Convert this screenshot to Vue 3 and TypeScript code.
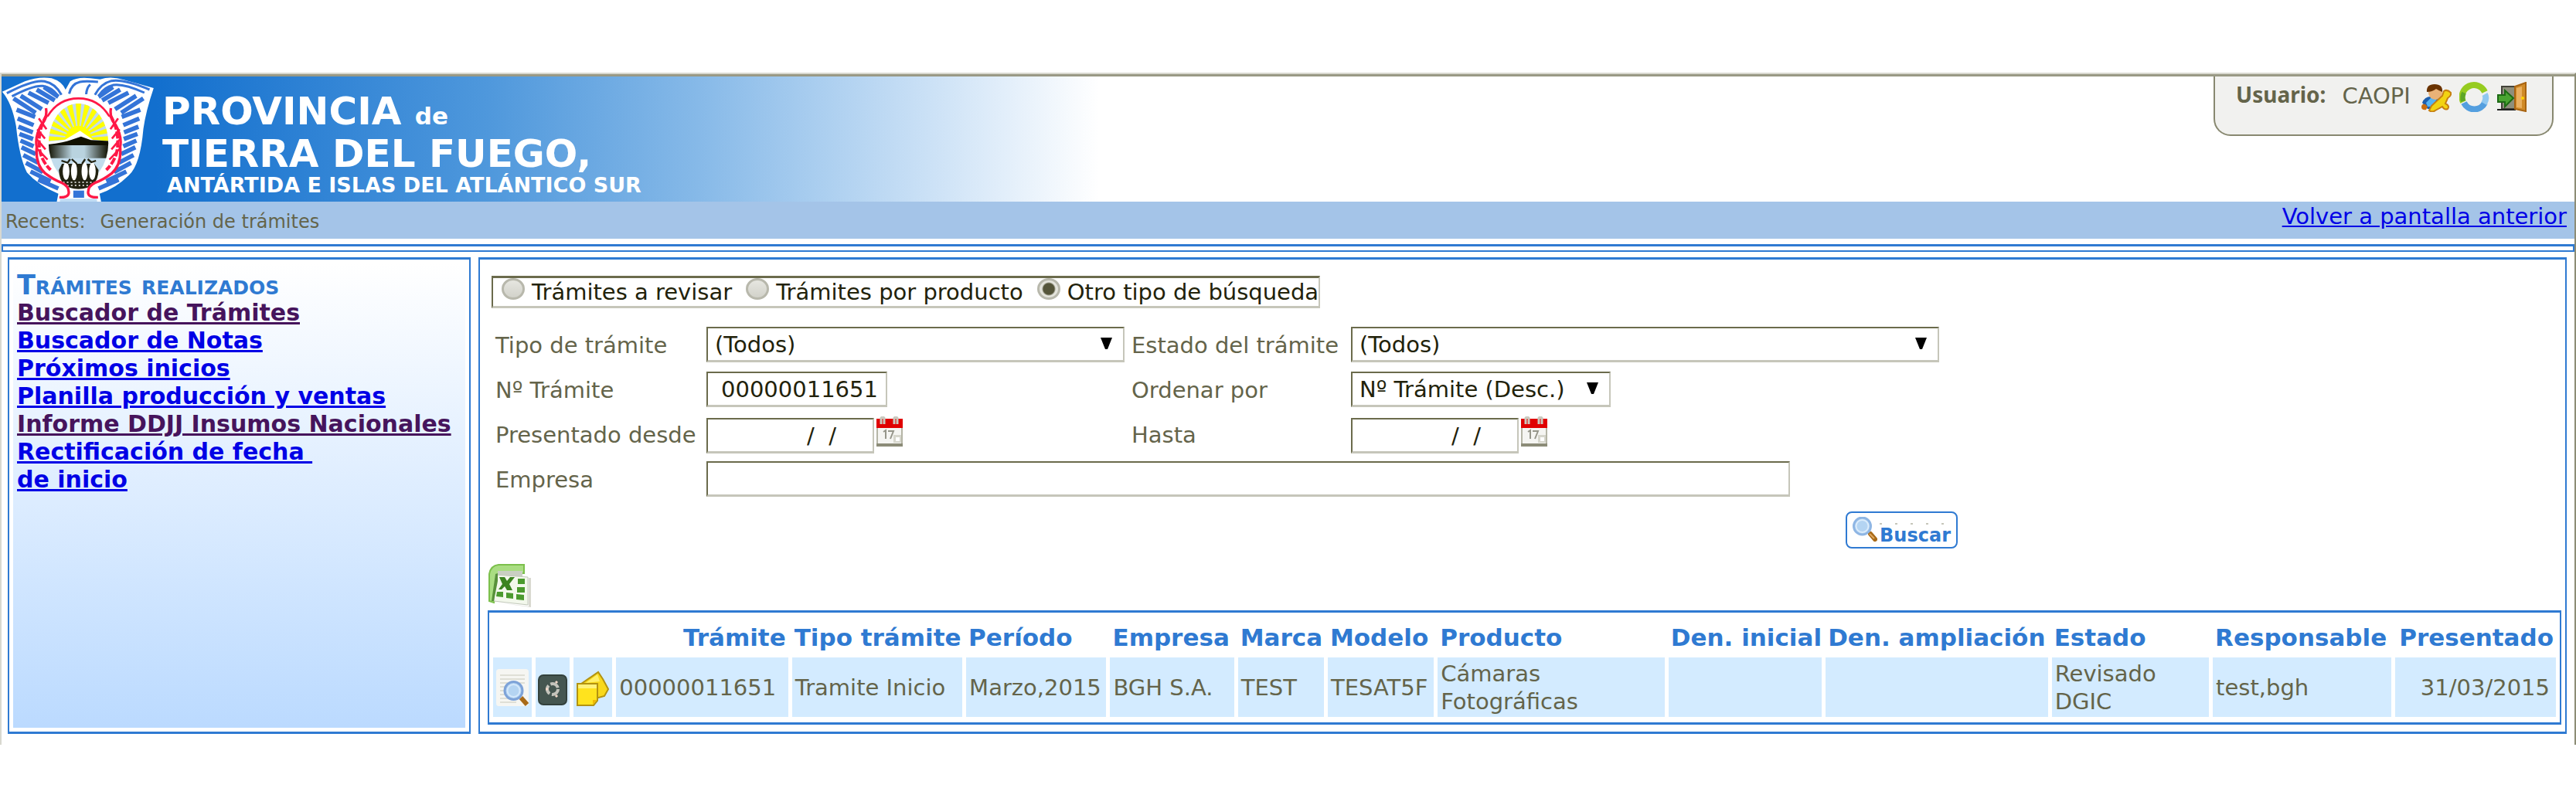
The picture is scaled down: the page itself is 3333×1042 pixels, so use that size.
<script setup lang="ts">
import { ref } from 'vue'

interface MenuItem {
  text: string
  visited: boolean
}

interface Column {
  title: string
  width: number
  right?: boolean
}

const menu: MenuItem[] = [
  { text: 'Buscador de Trámites', visited: true },
  { text: 'Buscador de Notas', visited: false },
  { text: 'Próximos inicios', visited: false },
  { text: 'Planilla producción y ventas', visited: false },
  { text: 'Informe DDJJ Insumos Nacionales', visited: true },
  { text: 'Rectificación de fecha\u00a0\nde inicio', visited: false },
]

const searchModes = ['Trámites a revisar', 'Trámites por producto', 'Otro tipo de búsqueda']
const mode = ref(searchModes[2])

const columns: Column[] = [
  { title: '', width: 50 },
  { title: '', width: 44 },
  { title: '', width: 50 },
  { title: 'Trámite', width: 222, right: true },
  { title: 'Tipo trámite', width: 220 },
  { title: 'Período', width: 181 },
  { title: 'Empresa', width: 160 },
  { title: 'Marca', width: 111 },
  { title: 'Modelo', width: 137 },
  { title: 'Producto', width: 293 },
  { title: 'Den. inicial', width: 198 },
  { title: 'Den. ampliación', width: 287 },
  { title: 'Estado', width: 203 },
  { title: 'Responsable', width: 230 },
  { title: 'Presentado', width: 208, right: true },
]

const row = [
  '00000011651', 'Tramite Inicio', 'Marzo,2015', 'BGH S.A.', 'TEST', 'TESAT5F',
  'Cámaras\nFotográficas', '', '', 'Revisado\nDGIC', 'test,bgh', '31/03/2015',
]

const tramite = ref('00000011651')
const desde = ref('/  /')
const hasta = ref('/  /')
const empresa = ref('')

const wingFeathers =
  'M52 142L138 198M80 132L162 184M110 120L188 160M142 108L212 150M170 98L226 136' +
  'M64 186L136 214M68 220L130 246M71 252L127 274M75 280L128 300M79 306L130 328' +
  'M83 332L138 358M90 362L148 392M100 392L166 428M118 426L196 464M148 458L226 492'

const sunRays = Array.from({ length: 13 }, (_, i) => {
  const a = Math.PI + (i * Math.PI) / 12
  const x1 = Math.round(304 + 150 * Math.cos(a - 0.08))
  const y1 = Math.round(298 + 150 * Math.sin(a - 0.08))
  const x2 = Math.round(304 + 150 * Math.cos(a + 0.08))
  const y2 = Math.round(298 + 150 * Math.sin(a + 0.08))
  return `M304 298L${x1} ${y1}L${x2} ${y2}Z`
}).join('')
</script>

<template>
  <div class="frame">
    <header class="banner">
      <svg class="crest" viewBox="6 57 590 486" aria-hidden="true">
        <defs>
          <linearGradient id="band" x1="0" x2="1" y1="0" y2="0">
            <stop offset="0" stop-color="#111100" />
            <stop offset="0.4" stop-color="#b9d3df" />
            <stop offset="0.6" stop-color="#b9d3df" />
            <stop offset="1" stop-color="#111100" />
          </linearGradient>
          <clipPath id="oval"><ellipse cx="304" cy="316" rx="116" ry="154" /></clipPath>
        </defs>
        <path fill="#fff" d="M8 116L96 76Q150 56 200 64Q240 76 254 108L272 76Q300 58 350 64L388 68Q430 54 480 70L596 102Q566 190 556 260Q544 400 500 440Q450 490 386 512L392 543H220L226 512Q150 482 104 430Q74 370 62 250Q46 160 8 116Z" />
        <g fill="none" stroke="#3474d8">
          <path stroke-width="9" d="M26 122Q130 68 172 76Q214 84 238 128M46 134Q130 90 166 94Q200 100 222 128" />
          <path stroke-width="9" d="M580 108Q480 66 432 74Q392 84 368 128M560 120Q480 84 440 90Q404 98 384 130M268 124Q276 86 310 78Q330 74 380 78M334 126Q336 100 350 88" />
          <path stroke-width="17" :d="wingFeathers" />
          <path stroke-width="17" transform="translate(608 0) scale(-1 1)" :d="wingFeathers" />
        </g>
        <path fill="#3474d8" d="M284 500H326V528H284Z" />
        <path fill="#c0dcf4" d="M232 532H376V543H232Z" />
        <ellipse cx="304" cy="312" rx="166" ry="182" fill="#fff" />
        <g clip-path="url(#oval)">
          <path fill="#c2dcec" d="M180 150H430V480H180Z" />
          <path fill="#ffff00" :d="sunRays" />
          <path fill="#ffff00" d="M250 302Q262 250 304 248Q348 250 358 302Z" />
          <path fill="#fff" d="M180 310L250 304L310 268L362 304L430 310V330H180Z" />
          <path fill="#111100" d="M180 322Q250 314 274 304L314 290L352 304L430 308V326H180Z" />
          <path fill="url(#band)" d="M186 324H420V374H186Z" />
        </g>
        <path fill="#222211" d="M228 420Q230 494 304 494Q380 494 382 420L366 396H240Z" />
        <g fill="#fff">
          <ellipse cx="256" cy="425" rx="13" ry="34" />
          <ellipse cx="287" cy="425" rx="12" ry="35" />
          <ellipse cx="328" cy="425" rx="12" ry="35" />
          <ellipse cx="358" cy="425" rx="13" ry="34" />
        </g>
        <path fill="none" stroke="#fff" stroke-width="4" stroke-dasharray="6 9" d="M244 468H366M260 480H350" />
        <path fill="none" stroke="#222211" stroke-width="7" d="M238 384L262 392L272 378M278 378L298 396M318 396L330 378M340 378L354 390L372 384" />
        <g fill="none" stroke="#ff1846">
          <path stroke-width="8" d="M184 212Q226 142 304 142Q382 142 424 212" />
          <path stroke-width="10" d="M178 180Q184 220 160 244Q134 290 142 330Q136 400 176 434Q210 460 240 470Q270 484 266 512Q262 528 230 526" />
          <path stroke-width="10" d="M430 180Q424 220 448 244Q474 290 466 330Q472 400 432 434Q398 460 368 470Q338 484 342 512Q346 528 380 526" />
          <path stroke-width="12" stroke-dasharray="28 7" d="M182 206Q146 262 152 330Q156 380 196 420" />
          <path stroke-width="12" stroke-dasharray="28 7" d="M426 206Q462 262 456 330Q452 380 412 420" />
          <path stroke-width="8" d="M150 220L180 262M144 262L174 298M142 300L176 340M144 338L184 380M458 220L428 262M464 262L434 298M466 300L432 340M464 338L424 380" />
        </g>
      </svg>
      <div class="title">
        <p class="title-main">PROVINCIA <span class="title-de">de</span></p>
        <p class="title-main">TIERRA DEL FUEGO,</p>
        <p class="title-sub">ANTÁRTIDA E ISLAS DEL ATLÁNTICO SUR</p>
      </div>
      <div class="user">
        <b class="user-label">Usuario:</b>
        <span class="user-name">CAOPI</span>
        <a href="#" aria-label="Editar usuario">
          <svg viewBox="0 0 39 39">
            <path fill="#1e5fae" d="M1 27Q4 19 12 19H27L24 35H8Z" />
            <path fill="#55b4f4" d="M6 27L14 19L20 22L14 32H8Z" />
            <circle cx="18" cy="14" r="9" fill="#eab277" />
            <path fill="#6a3300" d="M7 13Q6 3 17 3Q28 3 27 13Q22 11 19 9Q14 13 7 13Z" />
            <path fill="#c86c10" d="M0 33Q0 28 5 29L8 32L6 36Q1 37 0 33Z" />
            <path fill="#f2d312" stroke="#c67f12" stroke-width="2" d="M10 37L13 31L27 18L29 12Q33 9 38 14Q39 18 34 21L31 28Q37 31 34 35Q30 37 27 32L18 37Q14 40 10 37Z" />
          </svg>
        </a>
        <a href="#" aria-label="Actualizar">
          <svg viewBox="0 0 39 39" fill="none" stroke-width="8">
            <path stroke="#96cc20" d="M5 26A15 15 0 0 1 33 13" />
            <path stroke="#5ea628" stroke-width="6" d="M5 25A15 15 0 0 1 6 14" />
            <path stroke="#549fdf" d="M6 27A15 15 0 0 0 33 27" />
            <path stroke="#90c8f0" d="M32 28Q36 21 33 16" />
          </svg>
        </a>
        <a href="#" aria-label="Salir">
          <svg viewBox="0 0 39 39">
            <path fill="#8f8f7c" stroke="#43433a" stroke-width="2" d="M6 6H24V35H6Z" />
            <path stroke="#222" stroke-width="2" d="M0 36H24" />
            <path fill="#d08a28" stroke="#a86412" stroke-width="2" d="M23 6L37 1V38L23 35Z" />
            <path fill="#eab060" d="M25 8L32 6V34L25 33Z" />
            <circle cx="33" cy="21" r="2" fill="#ffd400" />
            <path fill="#4aa432" stroke="#1d6a14" stroke-width="2" d="M1 17H10V11L21 21L10 32V26H1Z" />
          </svg>
        </a>
      </div>
    </header>

    <nav class="crumbs">
      <p class="recents"><span>Recents:</span><span>Generación de trámites</span></p>
      <a class="back" href="#">Volver a pantalla anterior</a>
    </nav>

    <div class="rule"></div>

    <main class="body">
      <aside class="side">
        <div class="side-inner">
          <h2 class="side-title">Trámites realizados</h2>
          <a v-for="m in menu" :key="m.text" href="#" class="side-link" :class="{ visited: m.visited }">{{ m.text }}</a>
        </div>
      </aside>

      <section class="panel">
        <div class="modes" role="radiogroup" aria-label="Modo de búsqueda">
          <label v-for="s in searchModes" :key="s" class="mode">
            <input v-model="mode" type="radio" name="modo" :value="s" />
            <span>{{ s }}</span>
          </label>
        </div>

        <form class="search" @submit.prevent>
          <div class="fields">
            <label for="tipo">Tipo de trámite</label>
            <div class="select w-tipo">
              <select id="tipo"><option>(Todos)</option></select>
              <svg class="arrow" viewBox="0 0 15 15" aria-hidden="true"><path d="M0 0H15L9 15H6Z" /></svg>
            </div>
            <label for="estado">Estado del trámite</label>
            <div class="select w-estado">
              <select id="estado"><option>(Todos)</option></select>
              <svg class="arrow" viewBox="0 0 15 15" aria-hidden="true"><path d="M0 0H15L9 15H6Z" /></svg>
            </div>

            <label for="numero">Nº Trámite</label>
            <input id="numero" v-model="tramite" class="box w-numero" type="text" />
            <label for="orden">Ordenar por</label>
            <div class="select w-orden">
              <select id="orden"><option>Nº Trámite (Desc.)</option></select>
              <svg class="arrow" viewBox="0 0 15 15" aria-hidden="true"><path d="M0 0H15L9 15H6Z" /></svg>
            </div>

            <label for="desde">Presentado desde</label>
            <div class="date">
              <input id="desde" v-model="desde" class="box w-date" type="text" />
              <svg class="calendar" viewBox="0 0 34 39" aria-hidden="true">
                <path fill="#f5f5f2" stroke="#b5b5a6" stroke-width="2" d="M1 12H33V37H1Z" />
                <path fill="#e00000" d="M0 3H34V15H0Z" />
                <path fill="#8c8c78" d="M0 35H34V39H0Z" />
                <path fill="none" stroke="#c9c9be" stroke-width="3" d="M6 10V2Q8 0 10 2V10M23 10V2Q25 0 27 2V10" />
                <path fill="none" stroke="#96968a" stroke-width="2" d="M9 20L12 18V29M15 19H22L18 29" />
                <path fill="#d6d6cc" d="M22 24H32V34H22Z" />
                <path fill="#fff" d="M25 27H30V32H25Z" />
              </svg>
            </div>
            <label for="hasta">Hasta</label>
            <div class="date">
              <input id="hasta" v-model="hasta" class="box w-date" type="text" />
              <svg class="calendar" viewBox="0 0 34 39" aria-hidden="true">
                <path fill="#f5f5f2" stroke="#b5b5a6" stroke-width="2" d="M1 12H33V37H1Z" />
                <path fill="#e00000" d="M0 3H34V15H0Z" />
                <path fill="#8c8c78" d="M0 35H34V39H0Z" />
                <path fill="none" stroke="#c9c9be" stroke-width="3" d="M6 10V2Q8 0 10 2V10M23 10V2Q25 0 27 2V10" />
                <path fill="none" stroke="#96968a" stroke-width="2" d="M9 20L12 18V29M15 19H22L18 29" />
                <path fill="#d6d6cc" d="M22 24H32V34H22Z" />
                <path fill="#fff" d="M25 27H30V32H25Z" />
              </svg>
            </div>

            <label for="empresa">Empresa</label>
            <input id="empresa" v-model="empresa" class="box w-empresa" type="text" />
          </div>

          <div class="actions">
            <button class="buscar" type="submit">
              <svg viewBox="0 0 32 32" aria-hidden="true">
                <path stroke="#a86a18" stroke-width="6" stroke-linecap="round" d="M23 22L29 29" />
                <path stroke="#e0a860" stroke-width="2" d="M22 22L28 28" />
                <circle cx="12.5" cy="12" r="11" fill="#b4d4f2" stroke="#8fb6e4" stroke-width="3" />
                <circle cx="12.5" cy="12" r="8" fill="none" stroke="#dcecfb" stroke-width="2" />
              </svg>
              <span class="buscar-text">Buscar</span>
            </button>
          </div>
        </form>

        <a class="excel" href="#" aria-label="Exportar a Excel">
          <svg viewBox="0 0 56 56">
            <path fill="#d9d9d0" d="M12 50L53 55V18L56 18V56Z" />
            <path fill="#a9dd82" stroke="#7cc04c" stroke-width="2" d="M2 48V13Q4 2 14 1H47V12H18L8 50Z" />
            <path fill="#c9cfc2" d="M13 9H45V16H13Z" />
            <path fill="#f3f8ec" stroke="#c2c8ba" d="M10 14L52 17V53L8 48Z" />
            <path fill="#57913a" d="M5 48L10 13L13 12V22L8 48Z" />
            <path fill="#3c8420" d="M15 17H22L25 22L29 17H35L28 26L32 34H25L22 29L18 33H14L19 26Z" />
            <path fill="#4b9a2e" d="M39 19H48V26H39ZM38 30H48V37H38ZM37 39L47 40V47L37 46ZM24 37L33 38V45L24 44ZM12 36H20V43L11 42Z" />
          </svg>
        </a>

        <div class="results">
          <table>
            <colgroup>
              <col v-for="(c, i) in columns" :key="i" :style="{ width: c.width + 'px' }" />
            </colgroup>
            <thead>
              <tr>
                <th v-for="(c, i) in columns" :key="i" scope="col" :class="{ right: c.right }">{{ c.title }}</th>
              </tr>
            </thead>
            <tbody>
              <tr>
                <td class="icon">
                  <a href="#" aria-label="Ver">
                    <svg viewBox="0 0 42 48">
                      <path fill="#f6f6f2" d="M4 0H38Q42 0 42 4V44Q42 48 38 48H3Q0 48 0 44V4Q0 0 4 0Z" />
                      <path stroke="#dfdfd6" stroke-width="2" d="M5 8H37M5 13H37M5 18H37M5 23H15M5 28H13M5 33H13M5 38H15M5 43H26" />
                      <path stroke="#a86a18" stroke-width="6" d="M32 37L40 46" />
                      <circle cx="22.5" cy="28" r="11.5" fill="#b4d4f2" stroke="#7ea3d8" stroke-width="3" />
                      <circle cx="22.5" cy="28" r="8" fill="none" stroke="#d4e8fb" stroke-width="2" />
                    </svg>
                  </a>
                </td>
                <td class="icon">
                  <a href="#" aria-label="Proceso">
                    <svg viewBox="0 0 42 48">
                      <rect x="3" y="8" width="36" height="38" rx="6" fill="#455650" stroke="#33413c" stroke-width="2" />
                      <circle cx="21" cy="26" r="7" fill="none" stroke="#c4c4bc" stroke-width="4" stroke-dasharray="12 3" />
                      <path stroke="#f2d8c8" stroke-width="3" d="M12 26H15M25 18L27 16M25 34L27 36" />
                    </svg>
                  </a>
                </td>
                <td class="icon">
                  <a href="#" aria-label="Notas">
                    <svg viewBox="0 0 42 48" stroke="#b39310" stroke-width="2">
                      <path fill="#f8d81c" d="M6 19L28 4L34 13L41 26L36 35L25 38L14 30Z" />
                      <path fill="#fff06a" stroke="none" d="M12 18L27 7L30 16Z" />
                      <path fill="#ffe31e" d="M1 19H27V41L22 47H1Z" />
                      <path fill="#f2b800" stroke="none" d="M21 40H26L21 46Z" />
                      <path fill="#fff27a" stroke="none" d="M2 20H26V25H2Z" />
                    </svg>
                  </a>
                </td>
                <td v-for="(cell, i) in row" :key="i" :class="{ right: i === row.length - 1 }">{{ cell }}</td>
              </tr>
            </tbody>
          </table>
        </div>
      </section>
    </main>
  </div>
</template>

<style>
body {
  margin: 0;
  background: #fff;
}
</style>

<style scoped>
.frame,
.frame * {
  box-sizing: border-box;
}
.frame {
  margin-top: 94px;
  padding-bottom: 14px;
  border-left: 2px solid #d8d8d0;
  border-top: 2px solid #d8d8d0;
  border-right: 2px solid #8c8c76;
  font-family: 'DejaVu Sans', Verdana, sans-serif;
  font-size: 29px;
  line-height: 36px;
  color: #64644a;
}
.frame svg {
  display: block;
}
p,
h2 {
  margin: 0;
}
.banner {
  display: flex;
  align-items: flex-start;
  height: 165px;
  border-top: 3px solid #999985;
  background: linear-gradient(90deg, #126fce 200px, #4f98dc 630px, #86b9e8 900px, #cbe1f6 1200px, #fff 1420px);
}
.crest {
  flex: none;
  width: 197px;
  height: 162px;
}
.title {
  padding: 21px 0 0 11px;
  color: #fff;
  font-weight: bold;
  white-space: nowrap;
}
.title-main {
  font-size: 50px;
  line-height: 49px;
}
.title-de {
  font-size: 31px;
}
.title-sub {
  padding-left: 6px;
  font-size: 27px;
  line-height: 31px;
}
.user {
  display: flex;
  align-items: flex-start;
  width: 440px;
  height: 77px;
  margin-left: auto;
  margin-right: 27px;
  padding: 7px 0 0 27px;
  border: 2px solid #888870;
  border-top: 0;
  border-radius: 0 0 22px 22px;
  background: #f1f1ef;
}
.user-label {
  font-family: 'Noto Sans', sans-serif;
  font-size: 28px;
  line-height: 32px;
}
.user-name {
  margin: 0 14px 0 21px;
}
.user a {
  margin-right: 10px;
}
.user svg {
  width: 39px;
  height: 39px;
}
.crumbs {
  display: flex;
  justify-content: space-between;
  align-items: flex-start;
  height: 48px;
  padding: 1px 10px 0 5px;
  background: #a4c4e8;
}
.recents {
  display: flex;
  gap: 19px;
  padding-top: 7px;
  font-size: 24px;
}
.back {
  color: #0000e6;
}
.rule {
  height: 10px;
  margin-top: 7px;
  border: 2px solid #2f7ad2;
  border-top-width: 3px;
}
.body {
  display: flex;
  gap: 10px;
  padding: 7px 10px 0 8px;
}
.side {
  flex: none;
  width: 599px;
  padding: 5px;
  border: solid #2f7ad2;
  border-width: 3px 2px;
}
.side-inner {
  height: 100%;
  padding: 10px 0 0 5px;
  background: linear-gradient(#fff, #bbdaff);
  font-size: 30px;
  font-weight: bold;
}
.side-title {
  font-size: 35px;
  line-height: 36px;
  font-weight: bold;
  font-variant: small-caps;
  color: #2f7ad2;
}
.side-link {
  display: table;
  color: #0000e6;
  white-space: pre;
}
.visited {
  color: #46145c;
}
.panel {
  flex: 1;
  min-width: 0;
  padding: 21px 5px 9px 10px;
  border: solid #2f7ad2;
  border-width: 3px 2px;
}
.modes {
  display: flex;
  gap: 18px;
  width: fit-content;
  height: 42px;
  margin-left: 5px;
  padding: 0 0 0 11px;
  border: 2px solid #6b6b4c;
  border-top-width: 3px;
  border-right-color: #c6c6ba;
  border-bottom: 3px solid #c6c6ba;
  color: #22220a;
}
.mode {
  display: flex;
  gap: 9px;
  white-space: nowrap;
}
.mode input {
  appearance: none;
  width: 30px;
  height: 28px;
  margin: 0;
  border: 3px solid #b8b8ac;
  border-radius: 50%;
  background: linear-gradient(#e6e6e0, #d2d2ca);
}
.mode input:checked {
  background: radial-gradient(circle, #55553a 7px, #e4e4dc 9px);
}
.search {
  width: fit-content;
  margin: 24px 0 0 10px;
}
.fields {
  display: grid;
  grid-template-columns: 273px 550px 284px auto;
  grid-auto-rows: 48px;
  row-gap: 10px;
  align-items: start;
}
.fields label {
  line-height: 48px;
  white-space: nowrap;
}
.box,
.select select {
  width: 100%;
  height: 46px;
  margin: 0;
  border: 2px solid #6b6b4c;
  border-right-color: #c6c6ba;
  border-bottom: 3px solid #c6c6ba;
  border-radius: 0;
  background: #fff;
  color: #22220a;
  font: inherit;
  outline: 0;
}
.select {
  position: relative;
}
.select select {
  appearance: none;
  padding: 0 0 0 9px;
}
.arrow {
  position: absolute;
  top: 14px;
  right: 16px;
  width: 15px;
  height: 15px;
  pointer-events: none;
}
.fields .w-tipo {
  width: 541px;
}
.fields .w-estado {
  width: 761px;
}
.fields .w-orden {
  width: 336px;
}
.fields .w-numero {
  width: 234px;
  padding: 0 0 0 17px;
}
.fields .w-date {
  width: 217px;
  padding: 0 0 0 128px;
}
.fields .w-empresa {
  grid-column: span 3;
  width: 1402px;
  padding: 0 9px;
}
.date {
  display: flex;
  align-items: flex-end;
  gap: 3px;
  height: 48px;
}
.calendar {
  align-self: flex-start;
  width: 34px;
  height: 39px;
}
.actions {
  display: flex;
  justify-content: flex-end;
  width: 1892px;
  margin-top: 17px;
}
.buscar {
  display: flex;
  align-items: flex-start;
  gap: 3px;
  height: 48px;
  padding: 5px 7px;
  border: 2px solid #2f7ad2;
  border-radius: 8px;
  background: #fff;
  color: #2f7ad2;
  font: bold 24px/28px 'DejaVu Sans', Verdana, sans-serif;
}
.buscar svg {
  width: 32px;
  height: 32px;
}
.buscar-text {
  margin-top: 8px;
  padding-top: 2px;
  background: repeating-linear-gradient(90deg, #c6c6ba 0 3px, transparent 3px 20px) 0 0 / 100% 2px no-repeat;
}
.excel {
  display: block;
  width: 56px;
  margin-top: 20px;
}
.results {
  margin-top: 4px;
  padding-bottom: 2px;
  border: solid #2f7ad2;
  border-width: 3px 2px;
}
table {
  width: 100%;
  table-layout: fixed;
  border-collapse: separate;
  border-spacing: 5px;
}
th {
  padding: 9px 0 3px 3px;
  color: #2f7ad2;
  font-size: 31px;
  text-align: left;
  white-space: nowrap;
}
td {
  height: 77px;
  padding: 0 0 0 4px;
  background: #d3ebff;
  vertical-align: middle;
  white-space: pre;
}
th.right {
  padding-right: 3px;
  text-align: right;
}
td.right {
  padding-right: 8px;
  text-align: right;
}
td.icon {
  padding: 0;
}
td.icon svg {
  width: 42px;
  height: 48px;
  margin: 0 auto;
}
</style>
